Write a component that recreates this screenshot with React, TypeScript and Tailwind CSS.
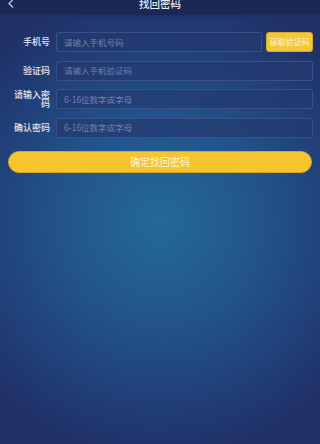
import React from "react";

const font = { fontFamily: '"Noto Sans CJK SC", "Noto Sans", sans-serif' };

function Field({ label, placeholder, right }: { label: string; placeholder: string; right?: React.ReactNode }) {
  return (
    <div className="flex h-[20px] items-center">
      <div className="ml-[13px] w-[37px] text-right text-[9px] leading-[9.5px] font-medium text-[#e3e8f2]">{label}</div>
      <div className="ml-[6px] flex h-[20px] flex-1 items-center rounded-[2px] border border-[#3a5089] bg-[#24396f]/70 pl-[7px] text-[8.5px] text-[#6f82ad]">
        {placeholder}
      </div>
      {right}
      <div className="w-[7px]" />
    </div>
  );
}

export default function App() {
  return (
    <div
      style={font}
      className="relative h-[444px] w-full overflow-hidden bg-[radial-gradient(ellipse_75%_55%_at_50%_50%,#24699a_0%,#22558c_40%,#213e77_75%,#202f66_100%)]"
    >
      <div className="relative flex h-[15px] justify-center bg-[#1b2755]">
        <svg className="absolute left-[7px] top-[-1px]" width="8" height="10" viewBox="0 0 8 10">
          <polyline points="6,0.5 2,4.5 6,8.5" fill="none" stroke="#c9d1e3" strokeWidth="1.2" />
        </svg>
        <div className="mt-[-2px] text-[10.5px] leading-[12px] font-medium text-[#e8ecf5]">找回密码</div>
      </div>
      <div className="h-[3px] bg-[linear-gradient(#1e2f60,transparent)]" />
      <div className="mt-[14px] flex flex-col gap-[8.5px]">
        <Field
          label="手机号"
          placeholder="请输入手机号码"
          right={
            <div className="ml-[4px] flex h-[20px] w-[47px] items-center justify-center rounded-[3px] border border-[#d6a928] bg-[#f4c63a] text-[8px] text-[#fff6d8]">
              获取验证码
            </div>
          }
        />
        <Field label="验证码" placeholder="请输入手机验证码" />
        <Field label="请输入密码" placeholder="6-16位数字或字母" />
        <Field label="确认密码" placeholder="6-16位数字或字母" />
      </div>
      <div className="mx-[8px] mt-[13px] flex h-[22px] items-center justify-center rounded-full border border-[#d9a526] bg-[#f6c42f] text-[10px] text-[#fff5da]">
        确定找回密码
      </div>
    </div>
  );
}
